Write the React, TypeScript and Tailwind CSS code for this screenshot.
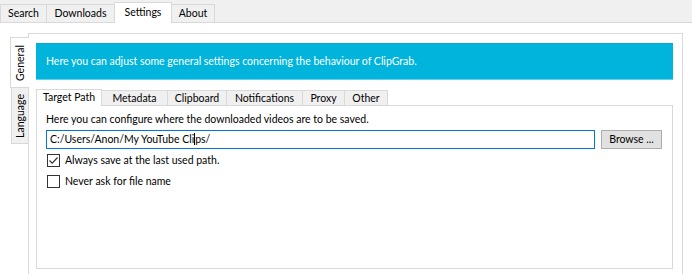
import React from "react";

const font = { fontFamily: 'Lato, "Open Sans", sans-serif', fontSize: "10.5px" };

function TopTab({ label, w, selected }: { label: string; w: number; selected?: boolean }) {
  return selected ? (
    <div
      className="relative z-10 -mb-px -mr-px flex h-[21px] items-center justify-center whitespace-nowrap border border-b-0 border-[#d9d9d9] bg-white pb-[2px]"
      style={{ width: w }}
    >
      {label}
    </div>
  ) : (
    <div
      className="-mr-px flex h-[18px] items-center justify-center whitespace-nowrap border border-b-0 border-[#d9d9d9] bg-[#f0f0f0]"
      style={{ width: w }}
    >
      {label}
    </div>
  );
}

function InnerTab({ label, w, selected }: { label: string; w: number; selected?: boolean }) {
  return selected ? (
    <div
      className="relative z-10 -mb-px -mr-px flex h-[17px] items-center justify-center whitespace-nowrap border border-b-0 border-[#d9d9d9] bg-white pb-[2px]"
      style={{ width: w }}
    >
      {label}
    </div>
  ) : (
    <div
      className="-mr-px flex h-[15px] items-center justify-center whitespace-nowrap border border-b-0 border-[#d9d9d9] bg-[#f0f0f0]"
      style={{ width: w }}
    >
      {label}
    </div>
  );
}

function Check({ checked }: { checked?: boolean }) {
  return (
    <div className="flex h-[13px] w-[13px] items-center justify-center border border-[#333] bg-white">
      {checked && (
        <svg width="11" height="11" viewBox="0 0 11 11">
          <path d="M1.5 5.5 L4.2 8.2 L9.5 2.5" fill="none" stroke="#333" strokeWidth="1.2" />
        </svg>
      )}
    </div>
  );
}

export default function App() {
  return (
    <div
      className="flex h-[274px] w-[692px] flex-col overflow-hidden bg-[#f0f0f0] leading-none text-black"
      style={font}
    >
      <div className="flex h-[22px] items-end">
        <TopTab label="Search" w={47} />
        <TopTab label="Downloads" w={69} />
        <TopTab label="Settings" w={58} selected />
        <TopTab label="About" w={44} />
      </div>
      <div className="flex flex-1 border-t border-[#d9d9d9] bg-white pl-[10px] pr-[9px] pt-[10px]">
        <div className="flex flex-col items-end pt-[4px]">
          <div className="relative z-10 -mr-px flex h-[51px] w-[19px] items-center justify-center border border-r-0 border-[#d9d9d9] bg-white">
            <span className="rotate-180 whitespace-nowrap [writing-mode:vertical-rl]">General</span>
          </div>
          <div className="flex h-[56px] w-[17px] items-center justify-center border border-r-0 border-t-0 border-[#d9d9d9] bg-[#f0f0f0]">
            <span className="rotate-180 whitespace-nowrap [writing-mode:vertical-rl]">Language</span>
          </div>
        </div>
        <div className="flex flex-1 flex-col border border-b-0 border-[#d9d9d9] bg-white pl-[7px] pr-[9px] pt-[9px]">
          <div className="flex h-[37px] items-center whitespace-nowrap border-y border-t-[#0aa8d0] border-b-[#5fd0ea] bg-[#00b4dc] pl-[10px] text-white">
            Here you can adjust some general settings concerning the behaviour of ClipGrab.
          </div>
          <div className="mt-[8px] flex h-[17px] items-end">
            <InnerTab label="Target Path" w={66} selected />
            <InnerTab label="Metadata" w={67} />
            <InnerTab label="Clipboard" w={60} />
            <InnerTab label="Notifications" w={77} />
            <InnerTab label="Proxy" w={43} />
            <InnerTab label="Other" w={44} />
          </div>
          <div className="flex h-[164px] flex-col border border-[#d9d9d9] bg-white pl-[9px] pt-[8px]">
            <div className="whitespace-nowrap">Here you can configure where the downloaded videos are to be saved.</div>
            <div className="mt-[5px] flex items-center">
              <div className="flex h-[19px] w-[549px] items-center whitespace-nowrap border border-[#0078d7] pl-[3px]">
                C:/Users/Anon/My YouTube Cli<span className="inline-block h-[12px] w-px bg-black" />ps/
              </div>
              <div className="ml-[6px] flex h-[19px] w-[61px] items-center justify-center whitespace-nowrap border border-[#adadad] bg-[#e1e1e1]">
                Browse ...
              </div>
            </div>
            <div className="mt-[5px] flex items-center gap-[5px] pl-px">
              <Check checked />
              <span className="whitespace-nowrap">Always save at the last used path.</span>
            </div>
            <div className="mt-[8px] flex items-center gap-[5px] pl-px">
              <Check />
              <span className="whitespace-nowrap">Never ask for file name</span>
            </div>
          </div>
        </div>
      </div>
    </div>
  );
}
